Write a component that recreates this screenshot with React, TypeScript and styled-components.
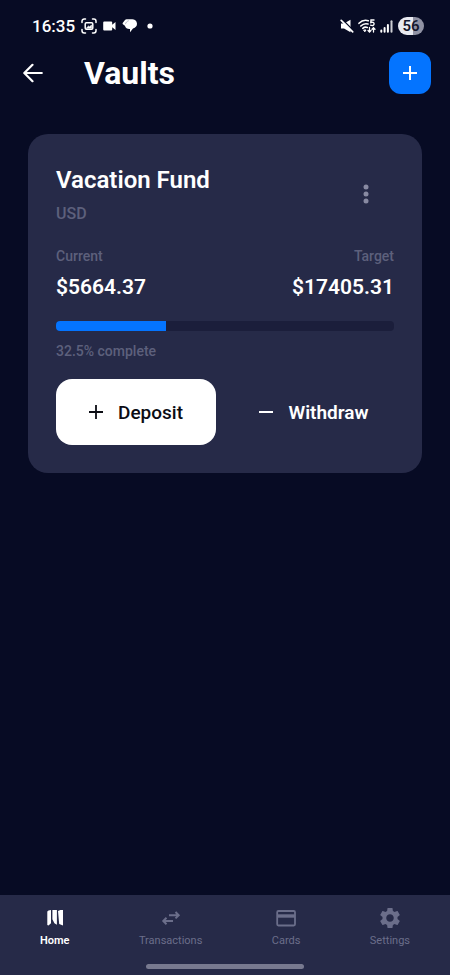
import React from "react";
import styled, { createGlobalStyle } from "styled-components";

const GlobalStyle = createGlobalStyle`
  *, *::before, *::after { box-sizing: border-box; }
  body { margin: 0; background: #070b24; font-family: Roboto, "Liberation Sans", sans-serif; }
  button { font: inherit; border: 0; padding: 0; background: none; color: inherit; cursor: pointer; }
  h1, h2, p, dl, dd, dt { margin: 0; }
  svg { display: block; flex: none; }
`;

const Screen = styled.div`
  min-height: 100vh;
  display: flex;
  flex-direction: column;
  color: #fff;
  background: #070b24;
`;

const StatusBar = styled.div`
  height: 52px;
  padding: 0 26px 0 32px;
  display: flex;
  align-items: center;
  justify-content: space-between;
`;

const StatusGroup = styled.div<{ $gap: number }>`
  display: flex;
  align-items: center;
  gap: ${(p) => p.$gap}px;
`;

const Clock = styled.time`
  font-size: 17px;
  font-weight: 500;
`;

const Battery = styled.span`
  width: 26px;
  height: 18px;
  margin-left: 1px;
  border-radius: 9px;
  background: linear-gradient(90deg, #e9eaf1 56%, #9092a4 56%);
  color: #15182e;
  font-size: 15px;
  font-weight: 600;
  line-height: 18px;
  text-align: center;
`;

const Header = styled.header`
  display: flex;
  align-items: center;
  padding: 0 19px 0 20px;
`;

const BackButton = styled.button`
  width: 26px;
  height: 42px;
  display: grid;
  place-items: center;
`;

const PageTitle = styled.h1`
  flex: 1;
  margin-left: 38px;
  font-size: 32px;
  font-weight: 700;
  line-height: 42px;
`;

const AddButton = styled.button`
  width: 42px;
  height: 42px;
  display: grid;
  place-items: center;
  border-radius: 12px;
  background: #0474ff;
`;

const Main = styled.main`
  flex: 1;
  padding: 40px 28px 28px;
`;

const Card = styled.article`
  padding: 28px;
  border-radius: 20px;
  background: #262a48;
`;

const CardTop = styled.div`
  display: flex;
  align-items: flex-start;
  justify-content: space-between;
`;

const CardTitle = styled.h2`
  font-size: 24px;
  font-weight: 600;
  line-height: 36px;
`;

const Currency = styled.p`
  color: #5d607c;
  font-size: 16px;
  font-weight: 500;
  line-height: 32px;
`;

const MenuButton = styled.button`
  width: 56px;
  height: 64px;
  display: grid;
  place-items: center;
  color: #888aa2;
`;

const Amounts = styled.dl`
  display: flex;
  justify-content: space-between;
  margin-top: 16px;
`;

const Amount = styled.div<{ $align: "left" | "right" }>`
  text-align: ${(p) => p.$align};
`;

const AmountLabel = styled.dt`
  color: #5d607c;
  font-size: 14px;
  font-weight: 500;
  line-height: 20px;
`;

const AmountValue = styled.dd`
  margin-top: 6px;
  font-size: 21px;
  font-weight: 600;
  line-height: 30px;
`;

const Progress = styled.div`
  height: 10px;
  margin-top: 19px;
  border-radius: 4px;
  overflow: hidden;
  background: #1b1e3b;
`;

const ProgressFill = styled.div`
  height: 100%;
  background: #0474ff;
`;

const ProgressText = styled.p`
  margin-top: 10px;
  color: #5d607c;
  font-size: 14px;
  font-weight: 500;
  line-height: 20px;
`;

const Actions = styled.div`
  display: grid;
  grid-template-columns: 1fr 1fr;
  gap: 18px;
  margin-top: 18px;
`;

const ActionButton = styled.button<{ $primary?: boolean }>`
  height: 66px;
  display: flex;
  align-items: center;
  justify-content: center;
  gap: 15px;
  border-radius: 16px;
  background: ${(p) => (p.$primary ? "#fff" : "transparent")};
  color: ${(p) => (p.$primary ? "#0c0d14" : "#fff")};
  && {
    font-size: 19px;
    font-weight: ${(p) => (p.$primary ? 500 : 600)};
  }
`;

const BottomNav = styled.nav`
  display: flex;
  flex-direction: column;
  align-items: center;
  padding-bottom: 6px;
  background: #262a48;
`;

const Tabs = styled.div`
  width: 100%;
  height: 69px;
  display: flex;
  justify-content: space-between;
  padding: 12px 40px 0;
`;

const Tab = styled.a<{ $active?: boolean }>`
  display: flex;
  flex-direction: column;
  align-items: center;
  gap: 4px;
  color: ${(p) => (p.$active ? "#fff" : "#6b6e8a")};
  font-size: 11px;
  font-weight: ${(p) => (p.$active ? 600 : 400)};
  line-height: 16px;
  text-decoration: none;
`;

const HomeIndicator = styled.div`
  width: 35%;
  height: 5px;
  border-radius: 3px;
  background: #77798f;
`;

const ScreenshotIcon = () => (
  <svg width="16" height="16" viewBox="0 0 16 16" fill="none" stroke="#fff" strokeWidth="1.500" strokeLinecap="round">
    <path d="M1 4.500V3.200A2.200 2.200 0 0 1 3.200 1h1.300M11.500 1h1.300A2.200 2.200 0 0 1 15 3.200v1.300M15 11.500v1.300a2.200 2.200 0 0 1-2.200 2.200h-1.300M4.500 15H3.200A2.200 2.200 0 0 1 1 12.800v-1.300" />
    <rect x="4.200" y="4.700" width="7.600" height="6.600" rx="1.200" />
    <path d="M5.500 10l2-2 1 .8L10.500 7v3z" fill="#fff" strokeWidth=".6" />
  </svg>
);

const VideoIcon = () => (
  <svg width="13" height="10" viewBox="0 0 13 10" fill="#fff">
    <path d="M1.200.5h7a1 1 0 0 1 1 1v2.300L12.500 1v8L9.200 6.200v2.300a1 1 0 0 1-1 1h-7a1 1 0 0 1-1-1v-7a1 1 0 0 1 1-1z" />
  </svg>
);

const ChatIcon = () => (
  <svg width="15" height="14" viewBox="0 0 15 14" fill="#fff">
    <path d="M2.800 1.200A2.300 2.300 0 0 1 4.800.2h4.700a4.700 4.700 0 0 1 1.500 9.300L8 13.200V10H7.400A4.700 4.700 0 0 1 2.900 6.800L.9 5.200A1 1 0 0 1 .7 4z" />
    <path d="M3.400 5.200c.4-1.800 1.600-3 3.400-3.500" fill="none" stroke="#8d90a4" strokeWidth=".6" />
  </svg>
);

const MuteIcon = () => (
  <svg width="14" height="14" viewBox="0 0 14 14" fill="#fff">
    <path d="M1 4.400h3L10.500.8v12.400L4 9.600H1z" />
    <path d="M2 .2L14 12.200" stroke="#070b24" strokeWidth="1.500" />
    <path d="M1.200 1.300L12.700 12.800" stroke="#fff" strokeWidth="1.700" strokeLinecap="round" />
  </svg>
);

const WifiIcon = () => (
  <svg width="18" height="14" viewBox="0 0 18 14" fill="none" stroke="#fff" strokeWidth="1.600" strokeLinecap="round">
    <path d="M1 4.300C3.500 1.700 7 .8 10.300 1.700M2.800 7c2-2 4.700-2.700 7.200-2M4.800 9.300c1.300-1.100 3-1.400 4.500-.8" />
    <path d="M6 11h2l-1 1.500z" fill="#fff" strokeWidth="1" />
    <path d="M16 1h-3l-.2 2.500c1.800-.7 3.400 0 3.300 1.500s-1.900 2-3.500 1.200" strokeWidth="1.400" />
    <path d="M11.500 8.500v4.300M10 11.500l1.500 1.500 1.500-1.500M15.500 13V8.700M14 10.200l1.500-1.500 1.500 1.500" strokeWidth="1.300" />
  </svg>
);

const SignalIcon = () => (
  <svg width="13" height="13" viewBox="0 0 13 13" stroke="#fff" strokeWidth="2" strokeLinecap="round">
    <path d="M1.300 10.500v1.200M4.600 8v3.700M7.900 5v6.700" />
    <path d="M11.500 1.300v10.400" opacity=".8" />
  </svg>
);

const PlusIcon = ({ stroke }: { stroke: number }) => (
  <svg width="14" height="14" viewBox="0 0 14 14" stroke="currentColor" strokeWidth={stroke}>
    <path d="M7 0v14M0 7h14" />
  </svg>
);

const MapIcon = () => (
  <svg width="22" height="22" viewBox="0 0 22 22" fill="currentColor">
    <path d="M3.300 4.500l1.200-1 2.500-.5v13.200l-2.500 2.200-1.200-.5zM8.400 3h4.500v14.800l-2.500-1.500-2-4zM14 3.900l2.400-.9H19v15.400l-3.800-1.500z" />
  </svg>
);

const TransferIcon = () => (
  <svg width="22" height="22" viewBox="0 0 22 22" fill="none" stroke="currentColor" strokeWidth="2">
    <path d="M9 8.200h9M15.500 5l3.200 3.200-3.200 3.200M13 14H4M6.500 10.800L3.300 14l3.200 3.200" />
  </svg>
);

const CardIcon = () => (
  <svg width="22" height="22" viewBox="0 0 22 22" fill="none" stroke="currentColor" strokeWidth="1.800">
    <rect x="2.200" y="4" width="17.800" height="14.500" rx="1.200" />
    <path d="M2 9h18" strokeWidth="3.400" />
  </svg>
);

const GearIcon = () => (
  <svg width="22" height="22" viewBox="1.500 1.500 21 21" fill="currentColor">
    <path d="M19.140 12.940c.04-.3.060-.61.060-.94 0-.32-.02-.64-.07-.94l2.030-1.580c.18-.14.23-.41.120-.61l-1.920-3.320c-.12-.22-.37-.29-.59-.22l-2.390.96c-.5-.38-1.030-.7-1.620-.94l-.36-2.540c-.04-.24-.24-.41-.48-.41h-3.840c-.24 0-.43.170-.47.410l-.36 2.540c-.59.240-1.130.570-1.620.940l-2.390-.96c-.22-.08-.47 0-.59.220L2.740 8.870c-.12.210-.08.470.120.610l2.030 1.580c-.05.300-.09.630-.09.940s.02.640.07.940l-2.030 1.580c-.18.140-.23.410-.12.610l1.920 3.320c.12.220.37.290.59.220l2.390-.96c.5.380 1.030.7 1.620.94l.36 2.540c.05.240.24.410.48.410h3.840c.24 0 .44-.17.470-.41l.36-2.540c.59-.24 1.130-.56 1.620-.94l2.390.96c.22.080.47 0 .59-.22l1.920-3.320c.12-.22.070-.47-.12-.61l-2.010-1.580zM12 15.600c-1.980 0-3.600-1.620-3.600-3.600s1.620-3.600 3.600-3.600 3.600 1.620 3.600 3.600-1.620 3.600-3.600 3.600z" />
  </svg>
);

const tabs = [
  { label: "Home", Icon: MapIcon, active: true },
  { label: "Transactions", Icon: TransferIcon },
  { label: "Cards", Icon: CardIcon },
  { label: "Settings", Icon: GearIcon },
];

const progress = 32.5;

export default function App() {
  return (
    <Screen>
      <GlobalStyle />
      <StatusBar>
        <StatusGroup $gap={6}>
          <Clock>16:35</Clock>
          <ScreenshotIcon />
          <VideoIcon />
          <ChatIcon />
          <svg width="14" height="6" viewBox="0 0 14 6">
            <circle cx="7" cy="3" r="2.600" fill="#fff" />
          </svg>
        </StatusGroup>
        <StatusGroup $gap={4}>
          <MuteIcon />
          <WifiIcon />
          <SignalIcon />
          <Battery>56</Battery>
        </StatusGroup>
      </StatusBar>
      <Header>
        <BackButton aria-label="Back">
          <svg width="20" height="20" viewBox="0 0 20 20" fill="none" stroke="#fff" strokeWidth="2.200" strokeLinejoin="round" strokeLinecap="round">
            <path d="M18.800 10H1.500M9.500 1.800L1.300 10l8.200 8.200" />
          </svg>
        </BackButton>
        <PageTitle>Vaults</PageTitle>
        <AddButton aria-label="Add vault">
          <PlusIcon stroke={2} />
        </AddButton>
      </Header>
      <Main>
        <Card>
          <CardTop>
            <div>
              <CardTitle>Vacation Fund</CardTitle>
              <Currency>USD</Currency>
            </div>
            <MenuButton aria-label="Vault options">
              <svg width="6" height="20" viewBox="0 0 6 20" fill="currentColor">
                <circle cx="3" cy="3" r="2.500" />
                <circle cx="3" cy="10" r="2.500" />
                <circle cx="3" cy="17" r="2.500" />
              </svg>
            </MenuButton>
          </CardTop>
          <Amounts>
            <Amount $align="left">
              <AmountLabel>Current</AmountLabel>
              <AmountValue>$5664.37</AmountValue>
            </Amount>
            <Amount $align="right">
              <AmountLabel>Target</AmountLabel>
              <AmountValue>$17405.31</AmountValue>
            </Amount>
          </Amounts>
          <Progress role="progressbar" aria-label="Vault progress" aria-valuenow={progress} aria-valuemin={0} aria-valuemax={100}>
            <ProgressFill style={{ width: `${progress}%` }} />
          </Progress>
          <ProgressText>{progress}% complete</ProgressText>
          <Actions>
            <ActionButton $primary>
              <PlusIcon stroke={1.8} />
              Deposit
            </ActionButton>
            <ActionButton>
              <svg width="14" height="14" viewBox="0 0 14 14" stroke="currentColor" strokeWidth="2">
                <path d="M0 7h14" />
              </svg>
              Withdraw
            </ActionButton>
          </Actions>
        </Card>
      </Main>
      <BottomNav aria-label="Main">
        <Tabs>
          {tabs.map(({ label, Icon, active }) => (
            <Tab key={label} href="#" $active={active} aria-current={active ? "page" : undefined}>
              <Icon />
              {label}
            </Tab>
          ))}
        </Tabs>
        <HomeIndicator />
      </BottomNav>
    </Screen>
  );
}
